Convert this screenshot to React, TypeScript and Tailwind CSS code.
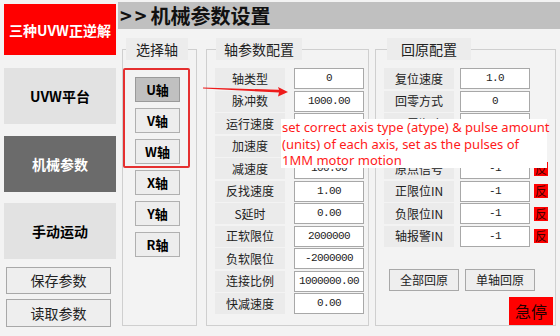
import type { ReactNode } from "react";

const CJK = "font-['Noto_Sans_CJK_SC',sans-serif]";

const AXES = ["U轴", "V轴", "W轴", "X轴", "Y轴", "R轴"];

const MID_ROWS: [string, string][] = [
  ["轴类型", "0"],
  ["脉冲数", "1000.00"],
  ["运行速度", "100.00"],
  ["加速度", "1000.00"],
  ["减速度", "100.00"],
  ["反找速度", "1.00"],
  ["S延时", "0.00"],
  ["正软限位", "2000000"],
  ["负软限位", "-2000000"],
  ["连接比例", "1000000.00"],
  ["快减速度", "0.00"],
];

const HOME_ROWS: [string, string, boolean][] = [
  ["复位速度", "1.0", false],
  ["回零方式", "0", false],
  ["回零顺序", "0", false],
  ["回零偏移", "0", false],
  ["原点信号", "-1", true],
  ["正限位IN", "-1", true],
  ["负限位IN", "-1", true],
  ["轴报警IN", "-1", true],
];

// group box with the caption sitting on the top border
function Group({ className, title, titleClass, children }: { className: string; title: string; titleClass: string; children: ReactNode }) {
  return (
    <div className={`h-[288px] pt-[11px] ${className}`}>
      <div className="h-full border border-[#cfcfcf] flex flex-col">
        <div className={`-mt-[12px] h-[22px] bg-[#ececec] text-center text-[14px] leading-[22px] text-[#222] ${titleClass}`}>{title}</div>
        {children}
      </div>
    </div>
  );
}

function AxisButton({ label, active }: { label: string; active?: boolean }) {
  return (
    <div
      className={`w-[45px] h-[25px] flex items-center justify-center border text-[13px] font-bold leading-none ${
        active ? "bg-[#c0c0c0] border-[#9a9a9a]" : "bg-[#ededed] border-[#b0b0b0]"
      }`}
    >
      {label}
    </div>
  );
}

function ValueBox({ value }: { value: string }) {
  return (
    <div className="w-[70px] h-[21px] bg-white border border-[#a8a8a8] flex items-center justify-center font-['Liberation_Mono',monospace] text-[11px] tracking-[-0.6px] text-[#222]">
      {value}
    </div>
  );
}

function Label({ text }: { text: string }) {
  return (
    <div className="w-[70px] h-[21px] bg-[#ebebeb] flex items-center justify-center text-[12px] leading-none text-[#222]">
      {text}
    </div>
  );
}

export default function App() {
  return (
    <div className={`relative w-[560px] h-[336px] overflow-hidden bg-[#f3f3f3] flex pl-[4px] ${CJK}`}>
      {/* left nav */}
      <div className="w-[112px] flex flex-col pt-[4px]">
        <div className="h-[51px] bg-[#ff0000] text-white font-bold text-[14px] flex items-center justify-center leading-none">
          三种UVW正逆解
        </div>
        <div className="mt-[13px] h-[56px] bg-[#e2e2e2] flex items-center justify-center font-bold text-[14px]">UVW平台</div>
        <div className="mt-[12px] h-[56px] bg-[#6b6b6b] text-white flex items-center justify-center font-bold text-[14px]">机械参数</div>
        <div className="mt-[11px] h-[56px] bg-[#e2e2e2] flex items-center justify-center font-bold text-[14px]">手动运动</div>
        <div className="mt-[8px] mx-[2px] w-[105px] h-[27px] bg-[#eeeeee] border border-[#a8a8a8] flex items-center justify-center text-[14px] text-[#222]">
          保存参数
        </div>
        <div className="mt-[5px] mx-[2px] w-[105px] h-[28px] bg-[#eeeeee] border border-[#a8a8a8] flex items-center justify-center text-[14px] text-[#222]">
          读取参数
        </div>
      </div>

      {/* main */}
      <div className="ml-[2px] flex-1 flex flex-col">
        <div className="mt-[2px] h-[27px] bg-[#c0c0c0] flex items-center pl-[2px] text-[20px] font-bold leading-none text-[#111]">
          <span className="tracking-[3px] mr-[1px]">&gt;&gt;</span>机械参数设置
        </div>

        <div className="mt-[9px] flex">
          <Group className="ml-[4px] w-[75px]" title="选择轴" titleClass="ml-[3px] w-[62px]">
            <div className="mt-[8px] w-[67px] border-2 border-[#e53030] rounded-[2px] pt-[7px] pb-[2px] pl-[10px] flex flex-col gap-[6px]">
              {AXES.slice(0, 3).map((a, i) => (
                <AxisButton key={a} label={a} active={i === 0} />
              ))}
            </div>
            <div className="mt-[2px] pl-[12px] flex flex-col gap-[6px]">
              {AXES.slice(3).map((a) => (
                <AxisButton key={a} label={a} />
              ))}
            </div>
          </Group>

          <Group className="ml-[9px] w-[163px]" title="轴参数配置" titleClass="ml-[9px] w-[86px]">
            <div className="mt-[8px] pl-[8px] flex flex-col gap-[1.5px]">
              {MID_ROWS.map(([l, v]) => (
                <div key={l} className="flex items-center gap-[9px]">
                  <Label text={l} />
                  <ValueBox value={v} />
                </div>
              ))}
            </div>
          </Group>

          <Group className="ml-[6px] w-[181px]" title="回原配置" titleClass="ml-[11px] w-[84px]">
            <div className="mt-[8px] pl-[8px] flex flex-col gap-[1.5px]">
              {HOME_ROWS.map(([l, v, inv]) => (
                <div key={l} className="flex items-center">
                  <Label text={l} />
                  <div className="ml-[6px]">
                    <ValueBox value={v} />
                  </div>
                  {inv && (
                    <div className="ml-[4px] w-[14px] h-[14px] bg-[#ff0000] text-[12px] leading-none flex items-center justify-center text-[#400]">
                      反
                    </div>
                  )}
                </div>
              ))}
            </div>
            <div className="mt-[22px] pl-[13px] flex gap-[6px]">
              <div className="w-[70px] h-[22px] bg-[#eeeeee] border border-[#a8a8a8] flex items-center justify-center text-[12px] text-[#222]">全部回原</div>
              <div className="w-[70px] h-[22px] bg-[#eeeeee] border border-[#a8a8a8] flex items-center justify-center text-[12px] text-[#222]">单轴回原</div>
            </div>
            <div className="mt-[6px] self-end mr-[2px] w-[44px] h-[28px] bg-[#ff0000] flex items-center justify-center text-[16px] text-[#200]">
              急停
            </div>
          </Group>
        </div>
      </div>

      {/* annotation */}
      <svg className="absolute left-0 top-0 pointer-events-none" width="560" height="336">
        <polygon points="203,87.6 279,89.8 278,87 288,92 278,96.5 279,92.6 203,88.4" fill="#ee1c1c" />
      </svg>
      <div className="absolute left-[281px] top-[119px] w-[266px] h-[49px] bg-white pl-[1px] font-['Noto_Sans',sans-serif] text-[13px] leading-[16.5px] text-[#ff1a1a] whitespace-nowrap">
        set correct axis type (atype) &amp; pulse amount
        <br />
        (units) of each axis, set as the pulses of
        <br />
        1MM motor motion
      </div>
    </div>
  );
}
